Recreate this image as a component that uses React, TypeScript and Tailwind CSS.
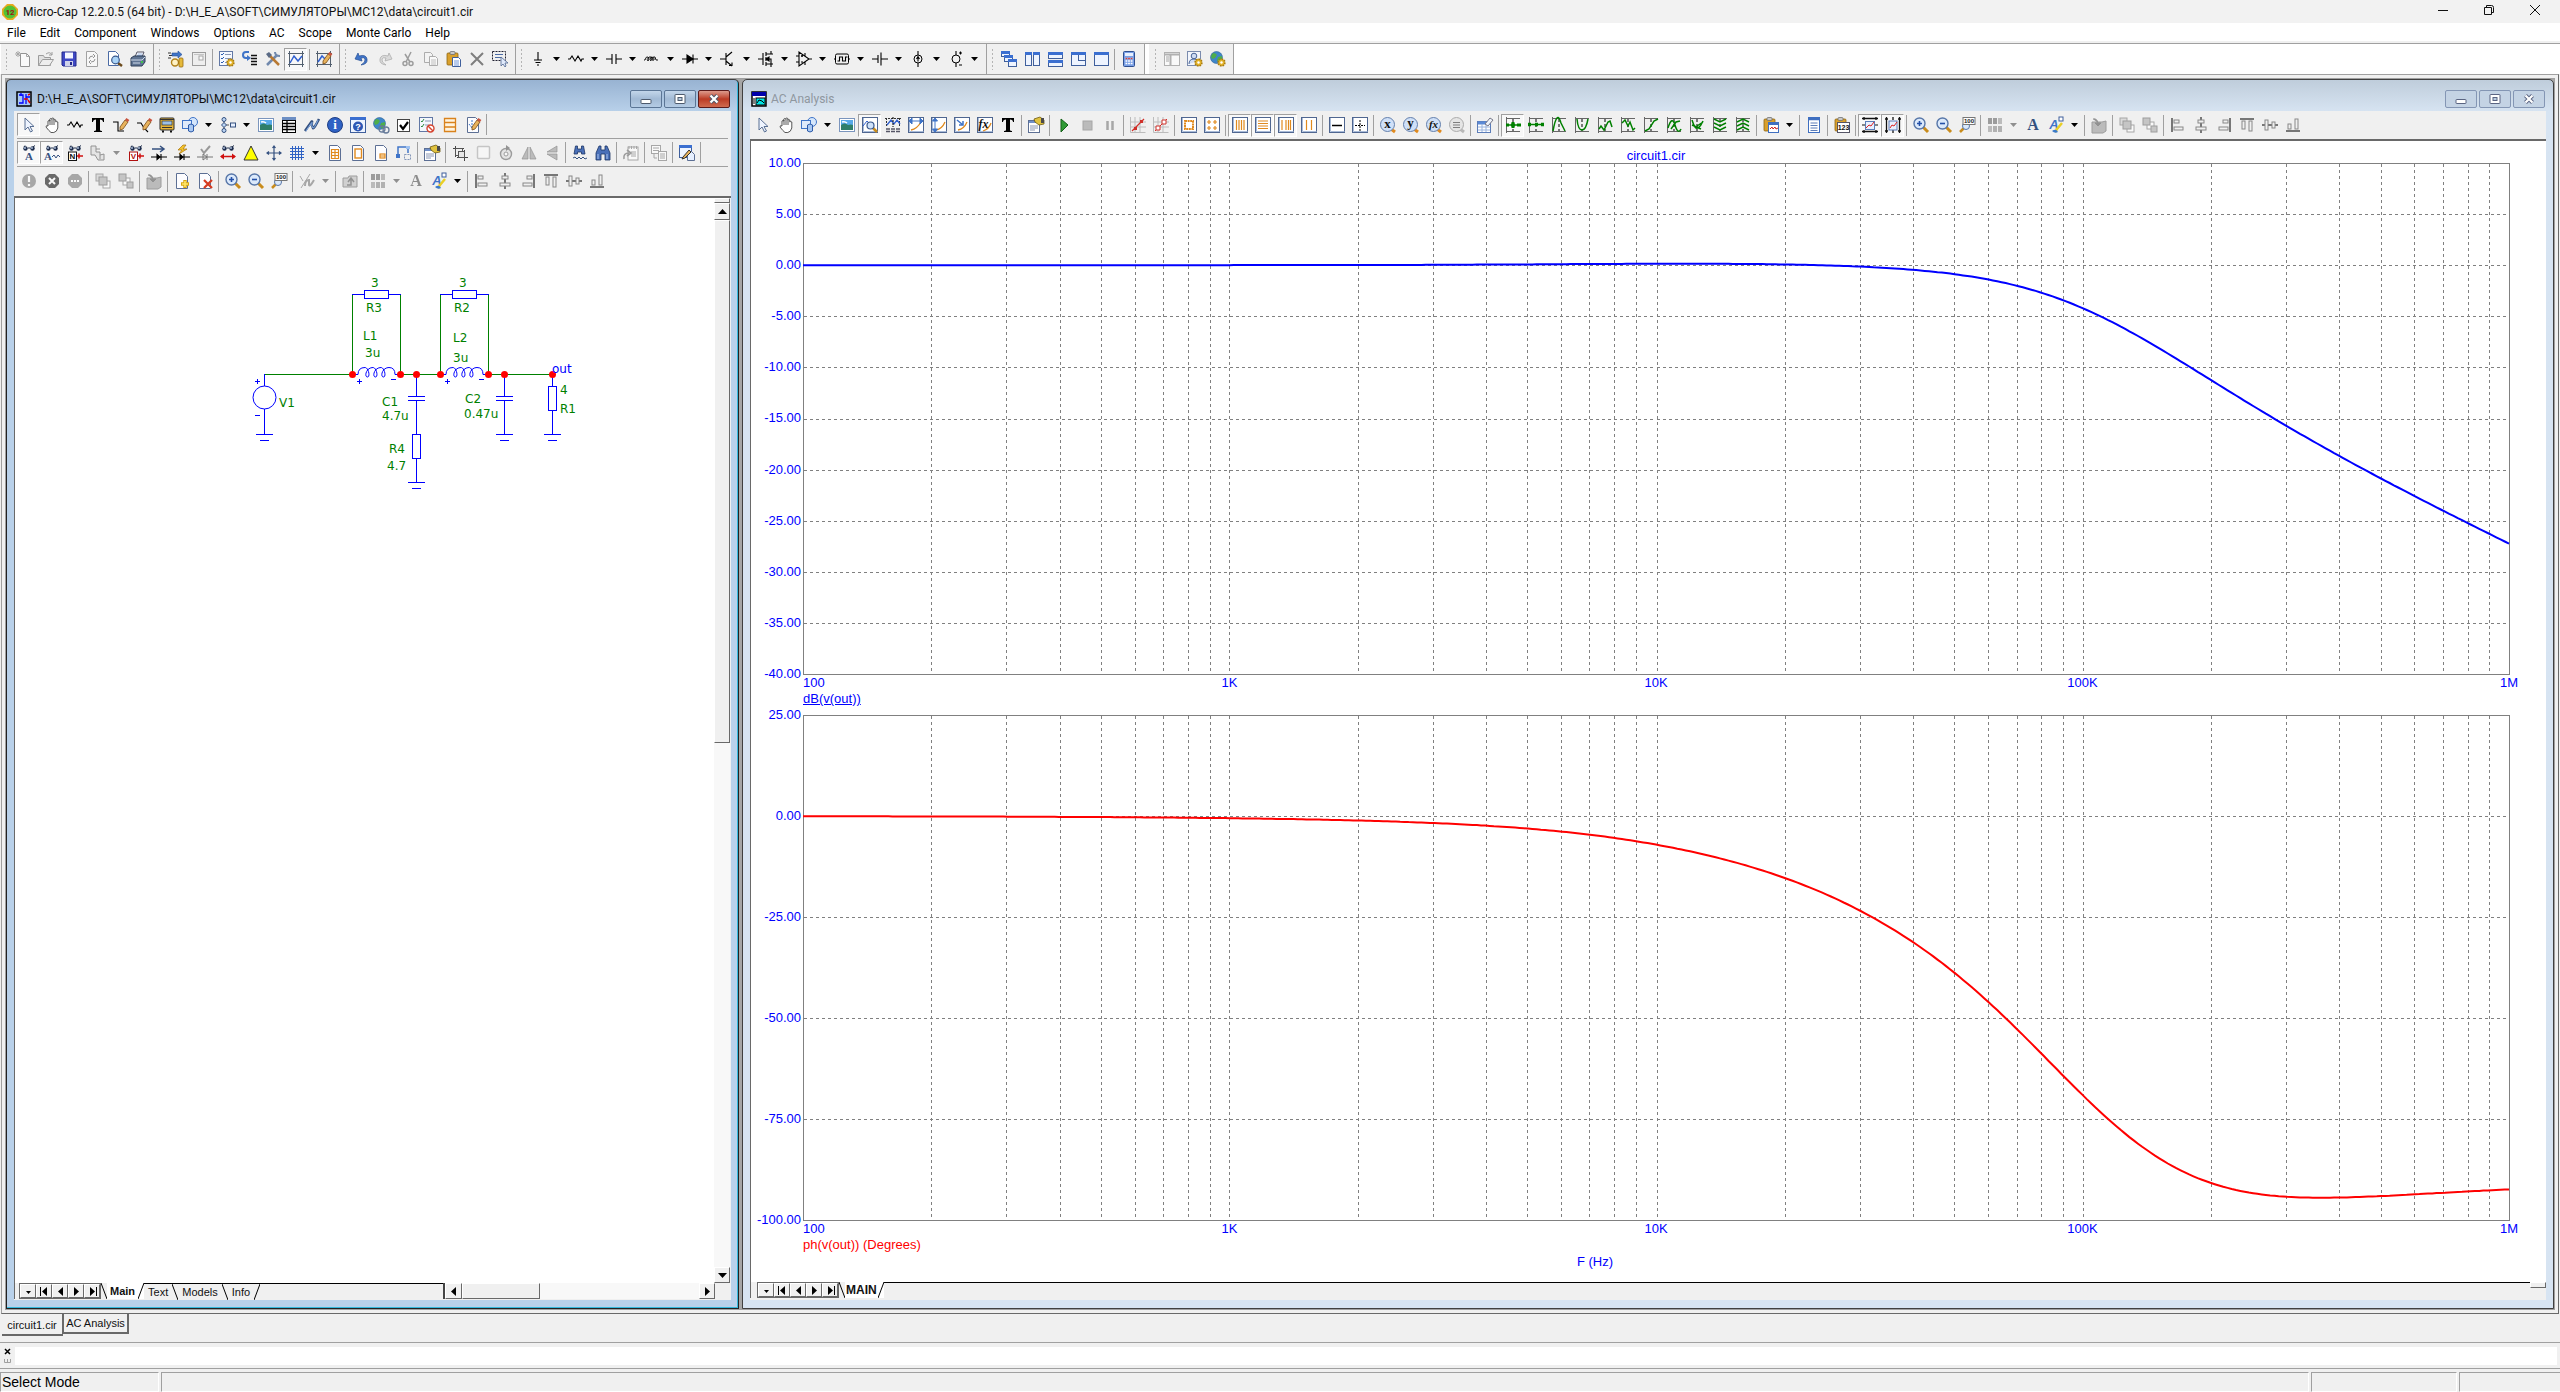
import type { ReactNode } from 'react';
import clsx from 'clsx';

const NAVY = '#34507f';
const BLUE = '#3f74c8';
const ORANGE = '#e08a1e';

const page = <path d="M2.5 .5h8l3 3v12h-11z" fill="#fdfdff" stroke="#5c6f94" />;
const copyPages = (
  <>
    <path d="M1.5 1.5h6l2 2v8h-8z" fill="#f4f6fb" stroke="#70809f" />
    <path d="M6.5 5.5h6l2 2v7h-8z" fill="#fff" stroke="#70809f" />
    <path d="M8 9h5M8 11h5M8 13h5" stroke="#8fa0bf" />
  </>
);
const lens = (
  <>
    <path d="M10 10l5 5" stroke="#c98c1c" strokeWidth="3" />
    <circle cx="6.5" cy="6.5" r="5.5" fill="#dbe9fb" stroke="#5776a8" strokeWidth="1.4" />
  </>
);
const glasses = (
  <>
    <circle cx="4.5" cy="3.5" r="2.2" fill="#1d2c4c" />
    <circle cx="11.5" cy="3.5" r="2.2" fill="#1d2c4c" />
    <circle cx="4" cy="3" r=".9" fill="#b9cbe6" />
    <circle cx="11" cy="3" r=".9" fill="#b9cbe6" />
    <path d="M3 2l1-1.5M12 2l2-1.5M7 3h2" stroke="#1d2c4c" />
  </>
);
const pencil = (
  <>
    <path d="M7 10l5-7 3 2-5 7-3 1z" fill="#e8b25c" stroke="#7a4d16" strokeWidth=".8" />
    <path d="M12 3l1.4-2 3 2-1.4 2z" fill="#c9543f" />
  </>
);
const gear = (
  <>
    <circle cx="11.5" cy="11.5" r="3.4" fill="#e5b52a" stroke="#a87c10" strokeWidth="1.6" strokeDasharray="1.6 1" />
    <circle cx="11.5" cy="11.5" r="1.2" fill="#fff" />
  </>
);
const clipboard = (
  <>
    <rect x="1" y="2" width="11" height="12" rx="1" fill="#d9a02c" stroke="#8d6412" strokeWidth=".8" />
    <rect x="4" y=".5" width="5" height="3" rx="1" fill="#c8c8c8" stroke="#666" strokeWidth=".7" />
  </>
);
const axes = <path d="M1.5 0v16M14.5 0v16M0 2.5h16M0 13.5h16" stroke="#53606f" />;
const plotBox = (
  <>
    <rect x=".5" y=".5" width="15" height="15" fill="#fff" stroke="#4f6690" />
    <path d="M1.5 1v13.500h14" fill="none" stroke="#a9bbd8" />
  </>
);
const greenBox = <path d="M15 1.500H1.500M1.500 0v16M1 14.500h14" fill="none" stroke="#666" />;
const globe = (
  <>
    <circle cx="6.500" cy="6.500" r="6" fill="#3f86c9" stroke="#2a5f94" strokeWidth=".6" />
    <path d="M3 2q3 0 4 2l-2 3-3 1-1-3zM8 6l4-1v3l-3 4-2-3z" fill="#4fae4a" />
  </>
);
const magnifier = (glyph: ReactNode) => (
  <>
    <path d="M11 12l4 3" stroke="#e08a1e" strokeWidth="3" />
    <circle cx="7.500" cy="7.500" r="7" fill="#cfe0f8" stroke="#6480ac" />
    {glyph}
  </>
);
const boxed = (d: string) => (
  <>
    {plotBox}
    <path d={d} fill="none" stroke={ORANGE} strokeWidth="1.2" />
  </>
);
const trace = (d: string) => (
  <>
    {greenBox}
    <path d="M8 2v12" stroke="#000" strokeDasharray="3 2" />
    <path d={d} fill="none" stroke="#008000" strokeWidth="1.5" />
  </>
);
const black = (d: string, fill = 'none') => <path d={d} fill={fill} stroke="#000" strokeWidth="1.1" />;
const win = (x: number, y: number, w: number, h: number) => (
  <>
    <rect x={x + 0.5} y={y + 0.5} width={w - 1} height={h - 1} fill="#eef4ff" stroke="#3f5f9c" />
    <rect x={x} y={y} width={w} height="3" fill="#3b6fd0" />
  </>
);
const bars = (line: string, a: number[], b: number[]) => (
  <>
    <path d={line} stroke="#777" strokeWidth="2" />
    <rect x={a[0]} y={a[1]} width={a[2]} height={a[3]} fill="#f0f0f0" stroke="#888" />
    <rect x={b[0]} y={b[1]} width={b[2]} height={b[3]} fill="#f0f0f0" stroke="#888" />
  </>
);
const glyph = (t: string, x: number, y: number, cls: string, fill: string) => (
  <text x={x} y={y} textAnchor="middle" fill={fill} className={cls}>
    {t}
  </text>
);

const icons: Record<string, ReactNode> = {
  new: (
    <>
      <path d="M5.500 2.500h6l3 3v10h-9z" fill="#fff" stroke="#555" />
      <path d="M11.500 2.500v3h3M3 0v6M0 3h6M1 1l4 4M5 1L1 5" fill="none" stroke="#777" />
    </>
  ),
  open: (
    <>
      <path d="M.5 14.500v-10h5l1 2h6v8z" fill="#d8d8d8" stroke="#666" />
      <path d="M.5 14.500l4-6h11l-4 6z" fill="#eee" stroke="#666" />
      <path d="M8 3q4-3 6 1M14 1v3h-3" fill="none" stroke="#666" />
    </>
  ),
  save: (
    <>
      <path d="M1 1h14v14H2l-1-1z" fill="#3f49c4" stroke="#23298a" />
      <rect x="4" y="1.500" width="8" height="6" fill="#f4f6ff" />
      <rect x="4" y="10" width="8" height="5" fill="#cfd3ea" />
      <rect x="9" y="11" width="2" height="3" fill="#23298a" />
    </>
  ),
  revert: (
    <>
      {page}
      <path d="M5 8q0-3 4-3M9 3l2 2-2 2M11 8q0 3-4 3M7 9l-2 2 2 2" fill="none" stroke="#555" />
    </>
  ),
  preview: (
    <>
      <path d="M1.500 .5h7l3 3v11h-10z" fill="#fff" stroke="#4b6ba5" />
      <path d="M11 12l4 3" stroke="#6b4a1c" strokeWidth="2.500" />
      <circle cx="8.500" cy="9" r="3.800" fill="#a9d3f7" stroke="#39588c" strokeWidth="1.200" />
    </>
  ),
  print: (
    <>
      <path d="M5 6l2-5h7l-2 5z" fill="#fff" stroke="#556" />
      <path d="M7.500 3h5M7 4.500h5" stroke="#7ba0d8" strokeWidth=".8" />
      <path d="M1 7l3-2h11v6l-3 4H1z" fill="#5f7493" stroke="#2f3e57" />
      <path d="M1 9h11l3-3M3 12h7" fill="none" stroke="#cfd9e8" />
      <rect x="11" y="10" width="2" height="2" fill="#3fc04a" />
    </>
  ),
  animate: (
    <>
      <path d="M0 2h3M1 4.500h4M0 7h3" stroke="#333" />
      <path d="M4 2h6V0l4 3.500L10 7V5H4z" fill={BLUE} stroke="#274f96" strokeWidth=".6" />
      <circle cx="7" cy="11.500" r="3.500" fill="#fff2c4" stroke="#b1821b" strokeWidth="1.400" />
      <rect x="11" y="7" width="4" height="9" rx="1" fill="#e5b93a" stroke="#9a6c10" strokeWidth=".8" />
    </>
  ),
  panel: (
    <>
      <rect x="1.500" y="1.500" width="13" height="13" fill="#eee" stroke="#666" />
      <rect x="8" y="5" width="4" height="4" fill="#fff" stroke="#777" />
      <path d="M3 3.500h10" stroke="#aaa" />
    </>
  ),
  prefs: (
    <>
      <rect x=".5" y=".5" width="13" height="14" fill="#f5f8ff" stroke="#6278a5" />
      <path d="M6 3.500h6M6 7.500h6M6 11.500h3" stroke="#8a97b4" />
      <path d="M2 3l1 1 2-2M2 7l1 1 2-2M2 11l1 1 2-2" fill="none" stroke="#2b5db0" />
      {gear}
    </>
  ),
  steps: (
    <>
      <path d="M7 1H4Q1 1 1 4t3 3h2" fill="none" stroke={BLUE} strokeWidth="2" />
      <path d="M5 4l4 3-4 3z" fill={BLUE} />
      <path d="M9 4.500h6M9 7.500h6M9 10.500h6M9 13.500h6" stroke="#111" strokeWidth="1.400" />
    </>
  ),
  tools: (
    <>
      <path d="M2 14L12 4" stroke="#7189ad" strokeWidth="2.500" />
      <path d="M4 4l10 10" stroke="#b87932" strokeWidth="2.500" />
      <path d="M1 3l3-2 3 3-3 3z" fill="#5a6a85" />
      <path d="M10 1q0 4 5 4" fill="none" stroke="#7189ad" strokeWidth="2" />
    </>
  ),
  graph: (
    <>
      {axes}
      <path d="M2 12l4-7 4 5 4-5" fill="none" stroke="#2f5fd0" strokeWidth="1.500" />
    </>
  ),
  graphPen: (
    <>
      {axes}
      <path d="M2 11l4-6 3 3" fill="none" stroke="#2f5fd0" strokeWidth="1.500" />
      {pencil}
    </>
  ),
  undo: <path d="M7 14q7-1 6-6-1-5-8-3L4 2 1 8l7 2-1-3q3-1 4 1 1 3-4 6z" fill={BLUE} stroke="#244d93" strokeWidth=".7" />,
  redo: <path d="M9 14Q2 13 3 8q1-5 8-3l1-3 3 6-7 2 1-3Q6 6 5 8q-1 3 4 6z" fill="#ccc" stroke="#777" strokeWidth=".7" />,
  cut: (
    <>
      <path d="M11 1L6 11M5 3l5 8" stroke="#666" strokeWidth="1.500" />
      <circle cx="5" cy="12.500" r="2" fill="none" stroke="#666" strokeWidth="1.500" />
      <circle cx="11" cy="12.500" r="2" fill="none" stroke="#666" strokeWidth="1.500" />
    </>
  ),
  copy: copyPages,
  paste: (
    <>
      {clipboard}
      <path d="M6.500 6.500h6l2 2v7h-8z" fill="#fff" stroke="#3f5f9c" />
      <path d="M8 10h5M8 12h5M8 14h5" stroke="#4b7bd0" strokeWidth=".8" />
    </>
  ),
  remove: <path d="M2 2l12 12M14 2L2 14" stroke="#333" strokeWidth="2" />,
  selectBox: (
    <>
      <rect x=".5" y=".5" width="13" height="9" fill="none" stroke="#223" strokeDasharray="2 1" />
      <path d="M3 3.500h8M3 6.500h6" stroke="#4b6ba5" />
      <path d="M9 6v9l2-2 2 3 1-1-1-3h3z" fill="#dfe9fb" stroke="#4f6690" strokeWidth=".8" />
    </>
  ),
  ground: black('M8 1v8M4 9h8M5.500 11.500h5M7 14h2'),
  resistor: black('M0 8h2l2-3 3 5 3-5 3 5 1-2h2'),
  cap: black('M0 8h6M6 3v10M10 3v10M10 8h6'),
  inductor: (
    <path d="M0 9h1q1-4 3-3 2 2 0 4-2-1 1-4 3-1 3 2-1 3-2 1 0-3 2-3 3 1 2 3-2 1-2-1 1-3 3-2l1 3h2" fill="none" stroke="#000" strokeWidth=".9" />
  ),
  diode: (
    <>
      {black('M0 8h16M11 3.500v9')}
      {black('M5 4v8l6-4z', '#000')}
    </>
  ),
  npn: black('M0 8h6M6 2v12M6 6l6-5M6 10l6 5M9 14.500h3v-3'),
  mosfet: (
    <>
      {black('M0 8h5M5 2v12M8 1v4M8 6v4M8 11v4M8 3h5v-3M8 8h5v8M8 13h5M13 3h2M13 13h2')}
      {black('M8 8l3-2v4z', '#000')}
    </>
  ),
  opamp: black('M3 1v14l10-7zM0 5h3M0 11h3M13 8h3M5 5h2M6 4v2M5 11h2M9 2v3M9 11v3'),
  pulse: (
    <>
      <rect x="1.500" y="3" width="13" height="10" rx="1.500" fill="none" stroke="#000" />
      {black('M0 8h1M15 8h1M3.500 10h2V6h3v4h3V6h2')}
    </>
  ),
  battery: black('M0 8h6M6 4v8M9 1.500v13M9 8h7'),
  isrc: (
    <>
      <circle cx="8" cy="8" r="4" fill="none" stroke="#000" />
      {black('M8 0v4M8 12v4M8 5.500v5M6.500 8L8 5.500 9.500 8')}
    </>
  ),
  vsrc: (
    <>
      <circle cx="8" cy="8" r="4" fill="none" stroke="#000" />
      {black('M8 0v4M8 12v4M11 2h3M12.500 .5v3M11 14h3')}
    </>
  ),
  cascade: (
    <>
      {win(0, 0, 9, 6)}
      {win(3, 4, 9, 7)}
      {win(7, 8, 9, 8)}
    </>
  ),
  tileV: (
    <>
      {win(1, 1, 7, 14)}
      {win(9, 1, 7, 14)}
    </>
  ),
  tileH: (
    <>
      {win(1, 1, 15, 7)}
      {win(1, 9, 15, 7)}
    </>
  ),
  tileX: (
    <>
      {win(1, 1, 15, 14)}
      <path d="M8.500 4v6M8 9.500h7" stroke="#3f5f9c" />
    </>
  ),
  single: win(1, 1, 15, 14),
  calc: (
    <>
      <rect x="2.500" y=".5" width="11" height="15" rx="1" fill="#7aa0e6" stroke="#2f4f8f" />
      <rect x="4" y="2" width="8" height="3" fill="#e7f0ff" />
      <path d="M4.500 7.500h7M4.500 10h7M4.500 12.500h7" stroke="#fff" strokeWidth="1.600" strokeDasharray="1.800 .8" />
      <path d="M4.500 7.500h7" stroke="#d04040" strokeWidth="1.600" strokeDasharray="1.800 .8" />
    </>
  ),
  sidebar: (
    <>
      <rect x=".5" y="1.500" width="15" height="13" fill="#fff" stroke="#888" />
      <path d="M1 3.500h14M6.500 3v11" stroke="#888" strokeWidth="2" />
      <path d="M2 6h3M2 8h3M2 10h3" stroke="#777" />
    </>
  ),
  userGear: (
    <>
      <rect x=".5" y=".5" width="13" height="14" fill="#f3f6fc" stroke="#7b8cae" />
      <circle cx="7" cy="5" r="2.800" fill="#cfdcf3" stroke="#4a6597" />
      <path d="M2 13q0-5 5-5 3 0 4 2" fill="#cfdcf3" stroke="#4a6597" />
      {gear}
    </>
  ),
  globeGear: (
    <>
      {globe}
      {gear}
    </>
  ),
  pointer: <path d="M4 1v12l3-3 2.500 5 2-1L9 9.500h4z" fill="#eef4ff" stroke="#5a7094" />,
  hand: (
    <path d="M4 9V4q1-1 1.800 0V2q1-1 2 0v-.5q1-1 2 0V3q1-1 2 0v2q1-1 2 0v6q-1 4-4 4.500H7Q5 14 2 10q0-2 2-1zM6 3v5M8 2v6M10 3v5" fill="#fff" stroke="#444" strokeWidth=".9" />
  ),
  text: <path d="M2 1h12v4h-1q0-2.500-3-2.500V13q0 1 2 1v1H4v-1q2 0 2-1V2.500Q3 2.500 3 5H2z" />,
  wirePen: (
    <>
      {black('M0 5h5v9h6')}
      {pencil}
    </>
  ),
  diagPen: (
    <>
      {black('M1 6h4l3 5 4 4')}
      {pencil}
    </>
  ),
  bus: (
    <>
      <rect x="1" y="1" width="14" height="12" rx="1" fill="#e5b53a" stroke="#2b2b2b" />
      <rect x="3" y="4" width="10" height="4" fill="#9dc1e4" stroke="#333" strokeWidth=".7" />
      <path d="M1 2.500h14M3 10.500h10" stroke="#333" />
      <path d="M3 14.500h2M11 14.500h2" stroke="#111" strokeWidth="2" />
    </>
  ),
  shapes: (
    <>
      <circle cx="11" cy="5" r="4.500" fill="#d5e6fb" stroke={BLUE} />
      <rect x=".5" y="3.500" width="9" height="8" fill="#dfeafa" stroke={BLUE} />
      <path d="M6.500 8v6q2.500 2 5 0V8q-2.500-2-5 0z" fill="#a9c8f2" stroke="#2d5aa8" />
    </>
  ),
  tree: (
    <>
      <path d="M4 4v8M4 8h5" stroke="#555" />
      <circle cx="4" cy="2.500" r="2" fill="#bcd5f5" stroke={NAVY} />
      <path d="M4 5.500l2.500 2.500L4 10.500 1.500 8z" fill="#bcd5f5" stroke={NAVY} />
      <circle cx="4" cy="13.500" r="2" fill="#bcd5f5" stroke={NAVY} />
      <rect x="10.500" y="6" width="5" height="4" fill="#e7f0ff" stroke={NAVY} />
    </>
  ),
  picture: (
    <>
      <rect x=".5" y="1.500" width="15" height="13" fill="#fff" stroke="#7b95bd" />
      <rect x="2" y="3" width="12" height="10" fill="#57a9e8" />
      <path d="M2 8q4-3 7 0 3-1 5 0v5H2z" fill="#2f7f6a" />
      <path d="M3 5q3-1 5 1" stroke="#fff" fill="none" strokeWidth="1.500" />
    </>
  ),
  table: (
    <>
      <rect x="1" y="0" width="14" height="3" fill="#6d8fc4" />
      <rect x="1.500" y="3.500" width="13" height="12" fill="#fff" stroke="#000" />
      <path d="M1 6.500h14M1 9.500h14M1 12.500h14M6 3v13" stroke="#000" strokeWidth="1.300" />
    </>
  ),
  wave: (
    <>
      <path d="M1 14Q9 2 8 5t1 6q1 1 6-9" fill="none" stroke={NAVY} strokeWidth="2.500" />
      <path d="M2 14Q9 3 8 6t1 5q1 1 5-8" fill="none" stroke="#86b0ea" />
    </>
  ),
  info: (
    <>
      <circle cx="8" cy="8" r="7.500" fill="#2f62c4" stroke="#1f3f86" />
      {glyph('i', 8, 12, "font-['Liberation_Serif'] text-[13px] font-bold", '#fff')}
    </>
  ),
  help: (
    <>
      {win(0, 0, 16, 16)}
      <circle cx="8" cy="9.500" r="5" fill="#2c56b4" />
      {glyph('?', 8, 13, "font-['Liberation_Sans'] text-[9px] font-bold", '#fff')}
    </>
  ),
  globeLink: (
    <>
      {globe}
      <path d="M6 12q0-3 3-3t3 3-3 3-3-3zM10 13q0-3 3-3t3 3-3 3-3-3z" fill="none" stroke="#667a99" strokeWidth="1.300" />
    </>
  ),
  check: (
    <>
      <rect x="1.500" y="2.500" width="12" height="12" fill="#fff" stroke="#444" />
      <path d="M4 8l3 4 5-7" fill="none" stroke="#000" strokeWidth="2.200" />
    </>
  ),
  checklist: (
    <>
      <rect x=".5" y=".5" width="13" height="14" fill="#f4f7fd" stroke="#6278a5" />
      <path d="M2 4l1 1 2-3M2 9l1 1 2-3" fill="none" stroke="#2c8a3c" />
      <path d="M6 4h6M6 8h4" stroke="#8a97b4" />
      <circle cx="11.500" cy="11.500" r="3.500" fill="#fff" stroke="#d64430" strokeWidth="1.400" />
      <path d="M9 9l5 5" stroke="#d64430" strokeWidth="1.400" />
    </>
  ),
  rows: <path d="M2.500 1.500h11v13h-11zM2.500 5.500h11M2.500 10h11" fill="#fff4e0" stroke="#d9821c" strokeWidth="1.300" />,
  pagePen: (
    <>
      {page}
      <path d="M7 3v7M4 7l3 4 3-4" stroke={BLUE} fill="none" strokeDasharray="2 1" />
      {pencil}
    </>
  ),
  glassA: (
    <>
      {glasses}
      {glyph('A', 8, 15, "font-['Liberation_Serif'] text-[11px] font-bold", NAVY)}
    </>
  ),
  glassRes: (
    <>
      {glasses}
      {glyph('A', 4, 15, "font-['Liberation_Serif'] text-[11px] font-bold", NAVY)}
      <path d="M8 12l2-2 2 3 2-3 2 2" fill="none" stroke={NAVY} />
    </>
  ),
  glassN: (
    <>
      {glasses}
      <rect x="1.500" y="7" width="8" height="8.500" fill="#fff" stroke="#111" />
      {glyph('N', 5.5, 14, "font-['Liberation_Sans'] text-[8px] font-bold", '#111')}
      <path d="M10 11h6M12 8.500v5" stroke="#d01010" strokeWidth="1.500" />
    </>
  ),
  glassV: (
    <>
      {glasses}
      <rect x="1.500" y="7" width="8" height="8.500" fill="#fff" stroke="#b01010" />
      {glyph('V', 5.5, 14, "font-['Liberation_Sans'] text-[8px] font-bold", '#b01010')}
      <path d="M10 11h6M12 8.500v5" stroke="#d01010" strokeWidth="1.500" />
    </>
  ),
  hands: <path d="M1 1h5v6h4v3l4-1v6H8l-3-5H1zM6 4h4M10 10v4" fill="#ddd" stroke="#555" />,
  current: (
    <>
      <path d="M1 4h11M9 1l4 3-4 3" fill="none" stroke={NAVY} strokeWidth="1.500" />
      {black('M0 12h16M10 9v6')}
      {black('M6 9.500v5l3-2.500z', '#000')}
    </>
  ),
  power: (
    <>
      <path d="M9 0L4 5h4L5 9l8-5H9l3-4z" fill="#f5c52a" stroke="#a9720c" strokeWidth=".7" />
      {black('M0 12h16M10 9v6')}
      {black('M6 9.500v5l3-2.500z', '#000')}
    </>
  ),
  condition: (
    <>
      <path d="M4 4l3 4 6-7" fill="none" stroke="#999" strokeWidth="2" />
      <path d="M0 12h16M10 9v6M6 9v6l4-3z" fill="none" stroke="#777" />
    </>
  ),
  pinLink: (
    <>
      {glasses}
      <path d="M1 11.500h14" stroke="#d01010" strokeWidth="1.500" />
      <path d="M0 11.500l4-3v6zM16 11.500l-4-3v6z" fill="#d01010" />
    </>
  ),
  triangle: <path d="M8 1l7 14H1z" fill="#ffff00" stroke="#333" />,
  cross: <path d="M8 1v14M1 8h14M6.500 3L8 1l1.500 2M6.500 13L8 15l1.500-2M3 6.500L1 8l2 1.500M13 6.500L15 8l-2 1.500" fill="none" stroke={NAVY} strokeWidth="1.200" />,
  grid: <path d="M3.500 1v14M6.500 1v14M9.500 1v14M12.500 1v14M1 3.500h14M1 6.500h14M1 9.500h14M1 12.500h14" stroke="#2f62c4" />,
  pageTable: (
    <>
      {page}
      <path d="M4.500 4.500h7v9h-7zM4.500 7.500h7M4.500 10.500h7M8 4.500v9" fill="none" stroke={ORANGE} strokeWidth="1.200" />
    </>
  ),
  pageBorder: (
    <>
      {page}
      <rect x="5" y="4" width="6.500" height="9" fill="none" stroke={ORANGE} strokeWidth="1.400" />
    </>
  ),
  pageForm: (
    <>
      {page}
      <rect x="7" y="9" width="5" height="4" fill="#fff4e0" stroke={ORANGE} strokeWidth="1.200" />
      <path d="M7 11h5" stroke={ORANGE} />
    </>
  ),
  connector: (
    <>
      <path d="M2 9V2h10v6" fill="none" stroke={BLUE} strokeWidth="1.500" />
      <rect x="0" y="9" width="4" height="4" fill={BLUE} />
      <rect x="10" y="1" width="4" height="3" fill="#9dc1f1" />
      <rect x="8.500" y="9.500" width="6" height="5" fill="none" stroke="#8597b8" strokeDasharray="2 1" />
    </>
  ),
  props: (
    <>
      <rect x=".5" y="3.500" width="11" height="12" fill="#fff" stroke="#5c6f94" />
      <rect x="1" y="4" width="10" height="2" fill="#6f8fc8" />
      <path d="M2 9h8M2 11h8M2 13h5" stroke="#8a97b4" />
      <path d="M6 2l6-2 4 3v4l-5 1-4-3z" fill="#e0c23e" stroke="#6f5a10" strokeWidth=".8" />
      <path d="M13 1h3v5h-3z" fill="#4a4a4a" />
    </>
  ),
  group: (
    <>
      <path d="M3.500 1v11M1 3.500h11M12.500 5v11M5 12.500h11" stroke="#444" />
      <rect x="3.500" y="3.500" width="7" height="7" fill="none" stroke="#555" />
      <rect x="6.500" y="6.500" width="6" height="6" fill="#e6e6e6" stroke="#555" />
    </>
  ),
  blank: <rect x="2.500" y="1.500" width="12" height="12" rx="1" fill="#fbfbfb" stroke="#aaa" strokeWidth="1.500" />,
  rotate: (
    <>
      <circle cx="8" cy="9" r="5.500" fill="#ddd" stroke="#666" strokeWidth="1.400" />
      <circle cx="8" cy="9" r="2" fill="#fff" stroke="#666" />
      <path d="M8 0v6l4-3z" fill="#555" />
    </>
  ),
  flipH: <path d="M7 2v12H1zM9 2v12h6z" fill="#999" stroke="#555" strokeWidth=".7" />,
  flipV: <path d="M13 7V1L3 7zM13 9v6L3 9z" fill="#999" stroke="#555" strokeWidth=".7" />,
  findWave: (
    <>
      <path d="M3.500 1h2v3h4V1h2l1.500 8H9.500V7h-4v2H2z" fill="#4a70b8" stroke="#1d3566" strokeWidth=".8" />
      <path d="M1 13l2-1 2 2 2-2 2 2 2-2 2 2 2-1" fill="none" stroke={NAVY} />
    </>
  ),
  find: (
    <>
      <path d="M4 1h2v4h4V1h2l3 7v7h-5V9H6v6H1V8z" fill="#4a70b8" stroke="#1d3566" strokeWidth=".8" />
      <path d="M3 9v5M12 9v5" stroke="#a9c3ee" />
    </>
  ),
  notebook: (
    <>
      <rect x="5" y="2" width="10" height="13" fill="#fff" stroke="#777" />
      <path d="M6 1v3M8.500 1v3M11 1v3M13.500 1v3M8 7h5M8 9h5M8 11h5" stroke="#777" />
      <path d="M1 14q-1-6 5-6M4 5l4 3-4 3" fill="none" stroke="#666" strokeWidth="1.600" />
    </>
  ),
  copyProps: (
    <>
      <rect x=".5" y=".5" width="9" height="8" fill="#fff" stroke="#777" />
      <rect x="7.500" y="6.500" width="8" height="9" fill="#fff" stroke="#777" />
      <path d="M2 3h6M2 5.500h6M9 9h5M9 11h5M9 13h5M3 9v4h3" fill="none" stroke="#777" />
    </>
  ),
  editPage: (
    <>
      {win(0, 0, 13, 13)}
      <path d="M8.500 15.500v-6l4-3 3 3v6z" fill="#e7f0ff" stroke="#5c6f94" />
      <path d="M4 12l6-7 2 2-6 6-3 1z" fill="#e8b25c" stroke="#222" strokeWidth=".9" />
    </>
  ),
  alert: (
    <>
      <circle cx="8" cy="8" r="7" fill="#777" />
      <path d="M8 3v6M8 11v2" stroke="#fff" strokeWidth="2.200" />
    </>
  ),
  stopX: (
    <>
      <path d="M5 1h6l4 4v6l-4 4H5l-4-4V5z" fill="#111" />
      <path d="M5 5l6 6M11 5l-6 6" stroke="#fff" strokeWidth="2" />
    </>
  ),
  dots: (
    <>
      <path d="M5 1h6l4 4v6l-4 4H5l-4-4V5z" fill="#777" />
      <path d="M4 8h8" stroke="#fff" strokeWidth="2" strokeDasharray="2 1" />
    </>
  ),
  front: (
    <>
      <rect x="8" y="8" width="7" height="7" fill="#fff" stroke="#777" />
      <rect x="1" y="1" width="7" height="7" fill="#ccc" stroke="#777" />
      <rect x="4" y="4" width="8" height="8" fill="#aaa" stroke="#666" />
    </>
  ),
  back: (
    <>
      <rect x="5" y="5" width="7" height="7" fill="#fff" stroke="#777" />
      <rect x="1" y="1" width="7" height="7" fill="#aaa" stroke="#666" />
      <rect x="9" y="9" width="6" height="6" fill="#aaa" stroke="#666" />
    </>
  ),
  load: (
    <>
      <path d="M1 5h10l4-1v10l-3 2H1z" fill="#999" stroke="#666" />
      <path d="M2 2q4-1 5 4M4 6h6L7 9z" fill="#555" stroke="#555" />
    </>
  ),
  pageAdd: (
    <>
      {page}
      <path d="M11 7v8M7 11h8" stroke="#d9a60f" strokeWidth="3.400" />
      <path d="M11 8v6M8 11h6" stroke="#ffe66b" strokeWidth="1.600" />
    </>
  ),
  pageDel: (
    <>
      {page}
      <path d="M7 7l8 8M15 7l-8 8" stroke="#d63a1f" strokeWidth="2.200" />
    </>
  ),
  zoomIn: (
    <>
      {lens}
      <path d="M6.500 4v5M4 6.500h5" stroke="#2450a8" strokeWidth="1.600" />
    </>
  ),
  zoomOut: (
    <>
      {lens}
      <path d="M4 6.500h5" stroke="#2450a8" strokeWidth="1.600" />
    </>
  ),
  zoom100: (
    <>
      <path d="M5 11l-4 4" stroke="#c98c1c" strokeWidth="2.500" />
      <circle cx="7" cy="9" r="3.500" fill="#dbe9fb" stroke="#5776a8" />
      <rect x="4" y=".5" width="12" height="7" fill="#fff" stroke="#777" />
      {glyph('100', 10, 6, "font-['Liberation_Sans'] text-[6px] font-bold", '#222')}
    </>
  ),
  slash: (
    <>
      <path d="M2 15L11 1M1 3l3 5" stroke="#777" />
      <path d="M6 13q0-6 4-6v5q1 2 5-5" fill="none" stroke="#777" strokeWidth="2" />
    </>
  ),
  folderUp: (
    <>
      <path d="M1 5h5l1-2h8v11H1z" fill="#bbb" stroke="#666" />
      <path d="M5 12h4V6M6 9l3-4 3 4" fill="none" stroke="#555" strokeWidth="1.500" />
    </>
  ),
  colorGrid: (
    <>
      <path d="M1 1h4v6H1zM6 1h4v6H6z" fill="#666" />
      <path d="M11 1h4v6h-4zM1 9h4v6H1z" fill="#999" />
      <path d="M6 9h4v6H6zM11 9h4v6h-4z" fill="#888" />
    </>
  ),
  fontA: glyph('A', 8, 13, "font-['Liberation_Serif'] text-[16px] font-bold", NAVY),
  fontPen: (
    <>
      {glyph('A', 6, 12, "font-['Liberation_Sans'] text-[13px] font-bold italic", BLUE)}
      <rect x="11" y="0" width="4" height="4" fill="#fff" stroke="#3f5f9c" />
      <path d="M14 6l-5 6-2 3" fill="none" stroke="#e9cf27" strokeWidth="2.500" />
      <path d="M4 14q4-3 6 1-3 2-6-1z" fill="#3b7ac9" />
    </>
  ),
  alignLeft: bars('M2 1v14', [4, 3, 5, 3], [4, 10, 9, 3]),
  alignCenter: bars('M8 0v16', [5, 3, 6, 3], [3, 10, 10, 3]),
  alignRight: bars('M14 1v14', [7, 3, 5, 3], [3, 10, 9, 3]),
  alignTop: bars('M1 2h14', [3, 4, 3, 8], [10, 4, 3, 10]),
  alignMiddle: bars('M0 8h16', [3, 3, 3, 10], [10, 5, 3, 6]),
  alignBottom: bars('M1 14h14', [3, 7, 3, 5], [10, 2, 3, 10]),
  zoomPlot: (
    <>
      {plotBox}
      <path d="M1 9l4-5 4 4" fill="none" stroke="#2f5fd0" />
      <path d="M11 11l4 4" stroke="#c98c1c" strokeWidth="2.500" />
      <circle cx="8.500" cy="8.500" r="3.500" fill="#cfe2fa" stroke="#39588c" strokeWidth="1.200" />
    </>
  ),
  cursorPlot: (
    <>
      <path d="M0 1.500h16M1.500 1v9M14.500 1v9" stroke="#333" strokeDasharray="2 1" />
      <path d="M2 8l4-5 3 4 3-4 3 4" fill="none" stroke="#2f5fd0" strokeWidth="1.300" />
      <path d="M8 0v10" stroke="#000" strokeDasharray="2 1" />
      <path d="M1 12h14M1 14.500h14" stroke="#556" strokeWidth="1.500" strokeDasharray="4 1" />
    </>
  ),
  scaleX: (
    <>
      {plotBox}
      <path d="M3 13q6-1 10-8" fill="none" stroke={ORANGE} strokeWidth="1.300" />
      <path d="M1 4l3-3v6zM15 4l-3-3v6zM3 4h10" fill={BLUE} stroke={BLUE} />
    </>
  ),
  scaleY: (
    <>
      {plotBox}
      <path d="M5 13q6-1 9-8" fill="none" stroke={ORANGE} strokeWidth="1.300" />
      <path d="M4 1L1.500 4h5zM4 15l-2.500-3h5zM4 3v10" fill={BLUE} stroke={BLUE} />
    </>
  ),
  scaleAuto: (
    <>
      {plotBox}
      <path d="M4 13q6-1 9-8" fill="none" stroke={ORANGE} strokeWidth="1.300" />
      <path d="M3 3l6 5M9 4v4H5" fill="none" stroke={BLUE} strokeWidth="1.500" />
    </>
  ),
  scaleFx: (
    <>
      {plotBox}
      <path d="M6 14q6-2 8-8" fill="none" stroke={ORANGE} strokeWidth="1.300" />
      {glyph('fx', 6.500, 11, "font-['Liberation_Serif'] text-[12px] font-bold italic", '#111')}
    </>
  ),
  play: <path d="M5 2l7 6-7 7z" fill="#2f9a35" stroke="#156018" />,
  stopSquare: <rect x="4" y="4" width="9" height="9" fill="#999" stroke="#777" />,
  pause: <path d="M5.500 4v9M10.500 4v9" stroke="#777" strokeWidth="2.500" />,
  tagPoints: (
    <>
      <path d="M.5 0v15.500h15M0 5h16M0 10h16M5 0v16M10 0v16" fill="none" stroke="#bcbcbc" />
      <path d="M2 14L14 2" stroke="#d0302a" strokeWidth="1.300" />
      <path d="M4 10h3v3H4zM10 3h3v3h-3z" fill="#d0302a" />
    </>
  ),
  tagSquares: (
    <>
      <path d="M.5 0v15.500h15M0 5h16M0 10h16M5 0v16M10 0v16" fill="none" stroke="#bcbcbc" />
      <path d="M2 14L14 2" stroke="#d0302a" />
      <path d="M3 9h4v4H3zM9 3h4v4H9z" fill="#fff" stroke="#d0302a" />
    </>
  ),
  tokenRing: (
    <>
      {plotBox}
      <rect x="4" y="4" width="8" height="8" fill="none" stroke={ORANGE} strokeWidth="2" strokeDasharray="2 .6" />
    </>
  ),
  tokenPlus: boxed('M3 5h4M5 3v4M9 5h4M11 3v4M3 11h4M5 9v4M9 11h4M11 9v4'),
  gridV: boxed('M4.500 3v10M7 3v10M9.500 3v10M12 3v10'),
  gridH: boxed('M3 4h10M3 6.500h10M3 9h10M3 11.500h10'),
  gridVWide: boxed('M4 3v10M8 3v10M10.500 3v10M12.500 3v10'),
  gridVPair: boxed('M5.500 3v10M10.500 3v10'),
  lineSolid: (
    <>
      {plotBox}
      <path d="M3 8.500h10" stroke="#000" strokeWidth="1.500" />
    </>
  ),
  lineCross: (
    <>
      {plotBox}
      <path d="M3 8.500h10M8 3v11" stroke="#000" strokeDasharray="2 1" />
    </>
  ),
  magX: magnifier(glyph('x', 7.5, 11, "font-['Liberation_Serif'] text-[13px] font-bold", '#111')),
  magY: magnifier(glyph('y', 7.5, 10, "font-['Liberation_Serif'] text-[13px] font-bold", '#111')),
  magF: magnifier(glyph('fx', 7.5, 11, "font-['Liberation_Serif'] text-[11px] font-bold italic", '#111')),
  magLines: magnifier(<path d="M4 5.500h7M4 8h7M4 10.500h7" stroke="#333" strokeWidth="1.200" />),
  tableErase: (
    <>
      <rect x=".5" y="4.500" width="13" height="11" fill="#fff" stroke="#5c7db8" />
      <path d="M1 6h12" stroke="#5b8ad6" strokeWidth="3" />
      <path d="M1 10h12M1 13h12M5 7v8M9 7v8" stroke="#9ab4de" />
      <path d="M8 7l5-6 3 2-5 6z" fill="#eef3fa" stroke="#778" />
    </>
  ),
  trace1: (
    <>
      {trace('M1 8h14')}
      <path d="M1 8h3M6 8h4M12 8h4M8 5v6" stroke="#008000" strokeWidth="3" />
    </>
  ),
  trace2: (
    <>
      {trace('M1 7.500h14')}
      <path d="M0 7.500h3M7 7.500h3M13 7.500h3" stroke="#008000" strokeWidth="3.500" />
    </>
  ),
  trace3: trace('M2 14Q6-8 10 6l4 8'),
  trace4: trace('M3 2q1 11 5 11t6-11'),
  trace5: trace('M2 12l2-3 3 4 4-8 2-1 2 6'),
  trace6: trace('M2 6l3-3 3 6 2-4 3 8 2-2'),
  trace7: trace('M2 14l4-2 5-8 4-2'),
  trace8: trace('M2 11Q6-2 9 8t6 4M5 12l5-7 4-1'),
  trace9: trace('M3 3q3 10 6 8t5-7M8 9l6-4M3 8l9 4'),
  trace10: trace('M2 2l6 3 6-3M2 6l6 3 6-3M2 10l6 3 6-3'),
  trace11: trace('M2 5l6-3 6 3M2 9l6-3 6 3M2 13l6-3 6 3'),
  pasteWave: (
    <>
      {clipboard}
      <rect x="5.500" y="5.500" width="10" height="10" fill="#fff" stroke="#3f6fc0" />
      <path d="M6 7h9" stroke="#3f6fc0" strokeWidth="2" />
      <path d="M7 12l2-2 1 2 2-2 1 2 2-1" fill="none" stroke="#c22" />
    </>
  ),
  list: (
    <>
      <rect x="2.500" y=".5" width="11" height="15" fill="#fff" stroke="#3f6fc0" />
      <path d="M3 2h10" stroke="#3f6fc0" strokeWidth="2.500" />
      <path d="M4.500 6h7M4.500 8.500h7M4.500 11h7M4.500 13.500h7" stroke="#5c7db8" />
    </>
  ),
  paste123: (
    <>
      {clipboard}
      <rect x="3.500" y="5.500" width="12" height="10" fill="#fff" stroke="#556" />
      {glyph('123', 9.5, 13, "font-['Liberation_Sans'] text-[7px] font-bold", '#111')}
    </>
  ),
  fitX: (
    <>
      <path d="M0 1.500h16M0 14.500h16M2 0v3M14 0v3M2 13v3M14 13v3" stroke="#111" strokeWidth="1.300" />
      <rect x="3.500" y="4.500" width="9" height="8" fill="#e7f0ff" stroke="#5c7db8" />
      <path d="M4 11l3-3 2 1 3-4" fill="none" stroke="#d22" />
      <path d="M0 8h3M13 8h3" stroke="#111" />
    </>
  ),
  fitY: (
    <>
      <path d="M1.500 0v16M14.500 0v16M0 2h3M0 14h3M13 2h3M13 14h3M8 0v3M8 13v3" stroke="#111" strokeWidth="1.300" />
      <rect x="4" y="4" width="8" height="9" fill="#e7f0ff" stroke="#5c7db8" />
      <path d="M5 11l2-3 2 1 3-4" fill="none" stroke="#d22" />
    </>
  ),
};

// "|" separator, "v"/"V" drop-down arrow (active/disabled), "*" pressed, "-" disabled
function Tools({ items }: { items: string }) {
  return (
    <>
      {items.split(' ').map((item, i) => {
        if (item === '|') {
          return <div key={i} className="mx-[2px] h-[21px] w-px shrink-0 bg-[#a0a0a0]" />;
        }
        if (item === 'v' || item === 'V') {
          return (
            <button key={i} aria-label="More" className="flex h-[22px] w-[15px] shrink-0 items-center justify-center">
              <svg viewBox="0 0 7 4" className={clsx('h-1 w-[7px]', item === 'V' && 'opacity-40')}>
                <path d="M0 0h7L3.500 4z" />
              </svg>
            </button>
          );
        }
        const pressed = item[0] === '*';
        const disabled = item[0] === '-';
        const name = pressed || disabled ? item.slice(1) : item;
        return (
          <button
            key={i}
            aria-label={name}
            disabled={disabled}
            className={clsx(
              'flex h-[23px] w-[23px] shrink-0 items-center justify-center border',
              pressed ? 'border-t-[#a0a0a0] border-r-white border-b-white border-l-[#a0a0a0] bg-[#f8f8f8]' : 'border-transparent',
            )}
          >
            <svg
              viewBox="0 0 16 16"
              className={clsx('h-4 w-4 shrink-0 overflow-visible', disabled && 'opacity-60 grayscale')}
            >
              {icons[name]}
            </svg>
          </button>
        );
      })}
    </>
  );
}

function Band({ items }: { items: string }) {
  return (
    <div className="flex items-center border-r border-[#a0a0a0] bg-[#f0f0f0] pr-1">
      <div className="mr-[3px] ml-1 h-[22px] w-[3px] bg-[radial-gradient(circle,#b4b4b4_1px,transparent_1px)] bg-size-[3px_4px]" />
      <Tools items={items} />
    </div>
  );
}

function CaptionButtons({ active }: { active?: boolean }) {
  const base = 'flex h-[18px] w-8 items-center justify-center rounded-[2px] border';
  const plain = active
    ? 'border-[#5b7595] bg-linear-to-b from-[#c3d6ea] via-[#a2bad5] to-[#b4cbe4]'
    : 'border-[#8496b4] bg-[#c4d3e4]';
  const red = 'border-[#5b1a1a] bg-linear-to-b from-[#dc9a8c] via-[#bb3a24] to-[#cf6a50]';
  const stroke = active ? '#4d5a6d' : '#5a6482';
  return (
    <div className="ml-auto flex gap-[2px]">
      <button aria-label="Minimize" className={clsx(base, plain)}>
        <svg viewBox="0 0 12 10" className="h-[10px] w-3">
          <rect x="1" y="5.500" width="10" height="4" rx=".5" fill="#fff" stroke={stroke} />
        </svg>
      </button>
      <button aria-label="Maximize" className={clsx(base, plain)}>
        <svg viewBox="0 0 12 10" className="h-[10px] w-3">
          <rect x="1" y=".5" width="10" height="9" rx=".5" fill="#fff" stroke={stroke} />
          <rect x="4" y="3.500" width="4" height="3" fill="#b8cbe0" stroke={stroke} />
        </svg>
      </button>
      <button aria-label="Close" className={clsx(base, active ? red : plain)}>
        <svg viewBox="0 0 12 10" className="h-[10px] w-3">
          <path d="M2.500 1.500l7 7M9.500 1.500l-7 7" stroke={stroke} strokeWidth="4" />
          <path d="M2.500 1.500l7 7M9.500 1.500l-7 7" stroke="#fff" strokeWidth="2.200" />
        </svg>
      </button>
    </div>
  );
}

const raised = 'border border-t-white border-l-white border-r-[#696969] border-b-[#696969] bg-[#f0f0f0]';

function ArrowButton({ label, d, className }: { label: string; d: string; className: string }) {
  return (
    <button aria-label={label} className={clsx('flex shrink-0 items-center justify-center', raised, className)}>
      <svg viewBox="0 0 9 9" className="h-[9px] w-[9px]">
        <path d={d} stroke="none" />
      </svg>
    </button>
  );
}

function SheetNav() {
  const buttons = [
    ['Sheet list', 'M2 4h5L4.500 7z'],
    ['First sheet', 'M0 0h1v9H0zM7 0v9L2 4.500z'],
    ['Previous sheet', 'M7 0v9L2 4.500z'],
    ['Next sheet', 'M2 0v9l5-4.500z'],
    ['Last sheet', 'M8 0h1v9H8zM2 0v9l5-4.500z'],
  ];
  return (
    <div className="flex border border-[#696969]">
      {buttons.map(([label, d]) => (
        <ArrowButton key={label} label={label} d={d} className="w-4" />
      ))}
    </div>
  );
}

function Slant({ back, top }: { back?: boolean; top?: boolean }) {
  return (
    <svg viewBox="0 0 6 16" className={clsx('h-4 w-[6px] shrink-0', top && 'bg-white')}>
      <path d={back ? 'M0 0l6 16' : 'M6 0L0 16'} stroke="#000" />
    </svg>
  );
}

const dot = (x: number) => <circle key={x} cx={x} cy="114.500" r="3.500" fill="#f00" />;
const loop = 'c3.500 0 5.500 9.500 2.500 9.500c-3.500 0-1.500-9.500 5.500-9.500';
const coil = `h6q0-7 7-7${loop}${loop}${loop}q6 0 6 7h6`;

function Schematic() {
  return (
    <svg className="block h-full w-full flex-1" role="img" aria-label="Circuit">
      <g transform="translate(215 62)" fill="none">
        <g stroke="#008000" shapeRendering="crispEdges">
          <path d="M34 114.500h88M170 114.500h40M258 114.500h64M122.500 114V34M170.500 114V34M210.500 114V34M258.500 114V34" />
        </g>
        <g stroke="#00f" shapeRendering="crispEdges">
          <path d="M122 34.500h12M159 34.500h12M134.500 30.500h24v8h-24z" />
          <path d="M210 34.500h12M247 34.500h12M222.500 30.500h24v8h-24z" />
          <path d="M34.500 114v12M34.500 149v25M26 174.500h17M30 180.500h9" />
          <path d="M186.500 114v22M178 136.500h17M178 140.500h17M186.500 141v33M182.500 174.500h8v24h-8zM186.500 199v23M178 222.500h17M182 228.500h9" />
          <path d="M274.500 114v22M266 136.500h17M266 140.500h17M274.500 141v33M266 174.500h17M270 180.500h9" />
          <path d="M322.500 114v12M318.500 126.500h8v24h-8zM322.500 151v23M314 174.500h17M318 180.500h9" />
          <path d="M25 121.500h5M27.500 119v5M25 155.500h5M127 121.500h5M129.500 119v5M161 119.500h5M215 121.500h5M217.500 119v5M249 119.500h5" />
        </g>
        <g stroke="#00f">
          <circle cx="34.500" cy="137.500" r="11.500" />
          <path d={`M122 114.500${coil}`} />
          <path d={`M210 114.500${coil}`} />
        </g>
        {[122.5, 170.5, 186.5, 210.5, 258.5, 274.5, 322.5].map(dot)}
        <g fill="#008000" className="font-['DejaVu_Sans',sans-serif] text-[12px]">
          <text x="141" y="27">3</text>
          <text x="136" y="52">R3</text>
          <text x="133" y="80">L1</text>
          <text x="135" y="97">3u</text>
          <text x="229" y="27">3</text>
          <text x="224" y="52">R2</text>
          <text x="223" y="82">L2</text>
          <text x="223" y="102">3u</text>
          <text x="49" y="147">V1</text>
          <text x="152" y="146">C1</text>
          <text x="152" y="160">4.7u</text>
          <text x="159" y="193">R4</text>
          <text x="157" y="210">4.7</text>
          <text x="235" y="143">C2</text>
          <text x="234" y="158">0.47u</text>
          <text x="330" y="134">4</text>
          <text x="330" y="153">R1</text>
          <text x="322" y="113" fill="#00f">out</text>
        </g>
      </g>
    </svg>
  );
}

type Complex = [number, number];
const add = (a: Complex, b: Complex): Complex => [a[0] + b[0], a[1] + b[1]];
const mul = (a: Complex, b: Complex): Complex => [a[0] * b[0] - a[1] * b[1], a[0] * b[1] + a[1] * b[0]];
const div = (a: Complex, b: Complex): Complex => {
  const m = b[0] * b[0] + b[1] * b[1];
  return [(a[0] * b[0] + a[1] * b[1]) / m, (a[1] * b[0] - a[0] * b[1]) / m];
};
const par = (a: Complex, b: Complex) => div(mul(a, b), add(a, b));

// v(out) / V1 for the two-section filter on the schematic
function response(f: number): Complex {
  const w = 2 * Math.PI * f;
  const coilZ = par([0, w * 3e-6], [3, 0]);
  const load = par([4, 0], [0, -1 / (w * 0.47e-6)]);
  const section2 = add(coilZ, load);
  const shunt = par(section2, [4.7, -1 / (w * 4.7e-6)]);
  return mul(div(shunt, add(coilZ, shunt)), div(load, section2));
}

const gain = (f: number) => 20 * Math.log10(Math.hypot(...response(f)));
const phase = (f: number) => (Math.atan2(response(f)[1], response(f)[0]) * 180) / Math.PI;

const W = 1705;
const xOf = (decade: number) => (decade / 4) * W;

type PlotProps = {
  className: string;
  height: number;
  max: number;
  step: number;
  rows: number;
  color: string;
  fn: (f: number) => number;
};

function Plot({ className, height, max, step, rows, color, fn }: PlotProps) {
  const yOf = (v: number) => ((max - v) / (step * rows)) * height;
  const verticals: number[] = [];
  for (let d = 0; d < 4; d++) {
    for (let n = d === 0 ? 2 : 1; n < 10; n++) verticals.push(Math.round(xOf(d + Math.log10(n))));
  }
  const points: string[] = [];
  for (let i = 0; i <= 400; i++) {
    points.push(`${xOf(i / 100).toFixed(1)},${yOf(fn(10 ** (2 + i / 100))).toFixed(1)}`);
  }
  return (
    <div className={clsx('flex min-h-0', className)}>
      <div className="flex w-[52px] shrink-0 flex-col justify-between pr-[2px] text-right">
        {Array.from({ length: rows + 1 }, (_, i) => (
          <span key={i} className="flex h-0 items-center justify-end">
            {(max - i * step).toFixed(2)}
          </span>
        ))}
      </div>
      <svg viewBox={`0 0 ${W} ${height}`} preserveAspectRatio="none" className="h-full min-w-0 flex-1 overflow-visible">
        <g stroke="#808080" fill="none" shapeRendering="crispEdges">
          {verticals.map((x) => (
            <path key={x} d={`M${x + 0.5} 1V${height}`} strokeDasharray="3 3" />
          ))}
          {Array.from({ length: rows - 1 }, (_, i) => (
            <path key={i} d={`M1 ${Math.round((height * (i + 1)) / rows) + 0.5}H${W}`} strokeDasharray="3 3" />
          ))}
          <rect x=".5" y=".5" width={W} height={height} />
        </g>
        <polyline points={points.join(' ')} fill="none" stroke={color} strokeWidth="2" />
      </svg>
    </div>
  );
}

function FrequencyAxis() {
  return (
    <div className="ml-[52px] flex h-[18px] justify-between leading-[18px]">
      <span className="w-0">100</span>
      {['1K', '10K', '100K', '1M'].map((label) => (
        <span key={label} className="flex w-0 justify-center">
          {label}
        </span>
      ))}
    </div>
  );
}

const MAIN_BANDS = [
  '-new -open save -revert preview print',
  'animate -panel | prefs steps tools *graph | graphPen',
  'undo -redo -cut -copy paste -remove selectBox',
  'ground v resistor v cap v inductor v diode v npn v mosfet v opamp v pulse v battery v isrc v vsrc v',
  'cascade tileV tileH tileX single | calc',
];

const ALIGN = 'alignLeft alignCenter alignRight alignTop alignMiddle alignBottom';

const SCHEMATIC_ROWS = [
  '*pointer hand resistor text wirePen diagPen bus shapes v tree v picture table wave info help globeLink check checklist rows pagePen |',
  '*glassA *glassRes glassN -hands V glassV current power condition pinLink triangle cross grid v pageTable pageBorder pageForm connector | props | group -blank -rotate -flipH -flipV | findWave find | -notebook | -copyProps | editPage |',
  `-alert -stopX -dots | -front -back | -load | pageAdd pageDel | zoomIn zoomOut zoom100 | -slash V | -folderUp | -colorGrid V -fontA fontPen v | ${ALIGN}`,
];

const ANALYSIS_TOOLS = `pointer hand shapes v picture *zoomPlot cursorPlot scaleX scaleY scaleAuto scaleFx text | props | play -stopSquare -pause | tagPoints tagSquares | tokenRing tokenPlus | *gridV *gridH *gridVWide gridVPair | lineSolid lineCross | magX magY magF -magLines | tableErase | *trace1 trace2 trace3 trace4 trace5 trace6 trace7 trace8 trace9 trace10 trace11 | pasteWave v | list | paste123 | *fitX *fitY | zoomIn zoomOut zoom100 | -colorGrid V fontA fontPen v | -load | -front -back | ${ALIGN}`;

const MENU = ['File', 'Edit', 'Component', 'Windows', 'Options', 'AC', 'Scope', 'Monte Carlo', 'Help'];

function SchematicWindow() {
  return (
    <section className="flex min-w-0 flex-[717_1_0%] flex-col rounded-t-[5px] border border-[#222] border-t-[#404040] bg-linear-to-b from-[#98b3d2] to-[#b9d1ea] to-[32px] px-[7px] pb-2 shadow-[inset_-1px_-1px_0_#35b9dc]">
      <header className="flex h-[31px] shrink-0 items-center gap-[5px] pt-[7px] pr-px pl-[2px] text-[12px]">
        <svg viewBox="0 0 16 16" className="h-4 w-4 shrink-0">
          <rect x="1" y="1" width="14" height="14" fill="#a9c8f4" stroke="#000" strokeWidth="1.500" />
          <path d="M3 4h4v8H3M5 2v3M10 3v10M10 6h4" fill="none" stroke="#00f" strokeWidth="1.300" />
          <path d="M8 8h4M12 4l2-1M12 9l2 3" stroke="#d00" strokeWidth="1.500" />
        </svg>
        <span>D:\H_E_A\SOFT\СИМУЛЯТОРЫ\MC12\data\circuit1.cir</span>
        <CaptionButtons active />
      </header>
      <div className="flex min-h-0 flex-1 flex-col bg-[#f0f0f0] pb-px">
        <div className="shrink-0 px-[3px] pb-px">
          {SCHEMATIC_ROWS.map((row, i) => (
            <div key={i} className={clsx('flex h-7 items-center overflow-hidden', i < 2 && 'border-b border-[#a0a0a0]')}>
              <Tools items={row} />
            </div>
          ))}
        </div>
        <div className="flex min-h-0 flex-1 border-t-2 border-l border-[#696969]">
          <div className="flex min-w-0 flex-1 bg-white">
            <Schematic />
          </div>
          <div className="mr-px flex w-4 shrink-0 flex-col bg-[#f8f8f8]">
            <div className={clsx('h-[5px]', raised)} />
            <ArrowButton label="Scroll up" d="M0 7h9L4.500 2z" className="h-[17px]" />
            <div className={clsx('flex-[522]', raised)} />
            <div className="flex-[525]" />
            <ArrowButton label="Scroll down" d="M0 2h9L4.500 7z" className="h-4" />
          </div>
        </div>
        <div className="flex h-4 shrink-0 border-l border-[#696969] pl-[4px] font-['Liberation_Sans',sans-serif] text-[11px] leading-4">
          <SheetNav />
          <div className="flex min-w-0 flex-[340_1_0%] border-r-2 border-[#444]">
            <Slant back />
            <button className="bg-white px-[3px] font-bold">Main</button>
            <Slant top />
            <div className="flex flex-1 items-center border-t border-black">
              <button className="px-1">Text</button>
              <Slant back />
              <button className="px-1">Models</button>
              <Slant back />
              <button className="px-1">Info</button>
              <Slant />
            </div>
          </div>
          <div className="flex min-w-0 flex-[268_1_0%] bg-[#f8f8f8]">
            <ArrowButton label="Scroll left" d="M7 0v9L2 4.500z" className="w-[17px]" />
            <div className={clsx('flex-[76]', raised)} />
            <div className="flex-[158]" />
            <ArrowButton label="Scroll right" d="M2 0v9l5-4.500z" className="w-4" />
          </div>
          <div className="w-4 shrink-0 bg-[#f0f0f0]" />
        </div>
      </div>
    </section>
  );
}

function AnalysisWindow() {
  return (
    <section className="flex min-w-0 flex-[1796_1_0%] flex-col rounded-t-[5px] border border-[#404040] bg-linear-to-b from-[#bfcddb] to-[#d7e4f2] to-[32px] px-[7px] pb-2">
      <header className="flex h-[31px] shrink-0 items-center gap-[4px] pt-[7px] pr-px pl-px text-[12px] text-[#8f979f]">
        <svg viewBox="0 0 16 16" className="h-4 w-4 shrink-0">
          <rect x="1" y="1" width="14" height="14" fill="#fff" stroke="#000" strokeWidth="1.500" />
          <rect x="1" y="1" width="14" height="4" fill="#00a" />
          <rect x="5" y="7" width="9" height="7" fill="#00e5e5" stroke="#000" />
          <path d="M2 8h2M2 10h2M2 12h2" stroke="#000" />
          <path d="M6 12l2-3 3 1 2 2" fill="none" stroke="#000" />
        </svg>
        <span>AC Analysis</span>
        <CaptionButtons />
      </header>
      <div className="flex min-h-0 flex-1 flex-col bg-[#f0f0f0] pb-[2px]">
        <div className="ml-px flex h-7 shrink-0 items-center overflow-hidden">
          <Tools items={ANALYSIS_TOOLS} />
        </div>
        <div className="flex min-h-0 flex-1 flex-col border-t-2 border-l border-[#696969] bg-white pr-[37px] pb-3 font-['Liberation_Sans',sans-serif] text-[13px] leading-[14px] text-[#00f]">
          <div className="ml-[52px] flex h-[22px] shrink-0 items-end justify-center">circuit1.cir</div>
          <Plot className="flex-[511_1_0%]" height={511} max={10} step={5} rows={10} color="#00f" fn={gain} />
          <FrequencyAxis />
          <div className="mb-[6px] ml-[52px] h-[17px] underline">dB(v(out))</div>
          <Plot className="flex-[505_1_0%]" height={505} max={25} step={25} rows={5} color="#f00" fn={phase} />
          <FrequencyAxis />
          <div className="ml-[52px] h-[17px] text-[#f00]">ph(v(out)) (Degrees)</div>
          <div className="mr-[70px] h-[15px] text-center">F (Hz)</div>
        </div>
        <div className="flex h-4 shrink-0 border-l border-[#696969] pl-[6px] font-['Liberation_Sans',sans-serif] text-[12px] leading-4">
          <SheetNav />
          <Slant back />
          <button className="bg-white px-px font-bold">MAIN</button>
          <Slant top />
          <div className="flex-1 border-t border-black" />
          <div className={clsx('h-[6px] w-4', raised)} />
        </div>
      </div>
    </section>
  );
}

export default function App() {
  return (
    <div className="flex h-screen min-h-[700px] flex-col overflow-hidden bg-[#f0f0f0] font-['Roboto','Noto_Sans',sans-serif] text-[12px] text-[#111]">
      <header className="flex h-[23px] shrink-0 items-center bg-[#f2f2f2] pr-[2px] pl-[2px]">
        <svg viewBox="0 0 16 16" className="mr-[5px] h-4 w-4">
          <path d="M5 0h6l5 5v6l-5 5H5l-5-5V5z" fill="#e9a91f" />
          <circle cx="8" cy="8" r="6.500" fill="#52c234" />
          <text x="8" y="11" textAnchor="middle" fill="#a01212" className="text-[8px] font-bold">
            12
          </text>
        </svg>
        <h1>Micro-Cap 12.2.0.5 (64 bit) - D:\H_E_A\SOFT\СИМУЛЯТОРЫ\MC12\data\circuit1.cir</h1>
        <div className="ml-auto flex h-full">
          {[
            ['Minimize', 'M1 6.500h10'],
            ['Restore', 'M1.500 3.500h7v7h-7zM3.500 3V1.500h5q2 0 2 2v5H9'],
            ['Close', 'M1 1l10 10M11 1L1 11'],
          ].map(([label, d]) => (
            <button key={label} aria-label={label} className="flex w-[46px] items-center justify-center pb-1">
              <svg viewBox="0 0 12 12" className="h-3 w-3">
                <path d={d} fill="none" stroke="#111" />
              </svg>
            </button>
          ))}
        </div>
      </header>
      <nav className="flex h-[18px] shrink-0 items-center gap-[14px] bg-white pt-[2px] pl-[7px] text-black">
        {MENU.map((item) => (
          <button key={item}>{item}</button>
        ))}
      </nav>
      <div className="mt-[2px] flex h-[31px] shrink-0 border-t border-[#a0a0a0] bg-white pl-px">
        {MAIN_BANDS.map((items, i) => (
          <Band key={i} items={items} />
        ))}
        <div className="ml-1 flex border-l border-[#f0f0f0]">
          <Band items="-sidebar userGear globeGear" />
        </div>
      </div>
      <main className="mx-px flex min-h-0 flex-1 border border-[#a0a0a0] border-r-[#696969] border-b-[#696969] p-[3px]">
        <div className="flex min-w-0 flex-1 gap-[3px] border border-[#a0a0a0] bg-[#a6a6a6]">
          <SchematicWindow />
          <AnalysisWindow />
        </div>
      </main>
      <div className="flex h-[28px] shrink-0 items-start pl-[2px] font-['Liberation_Sans',sans-serif] text-[11px]">
        <button className="h-[22px] w-[61px] border-r border-b-2 border-[#696969] pt-[2px]">circuit1.cir</button>
        <button className="h-[20px] w-[66px] border-r-2 border-b-2 border-l border-[#696969]">AC Analysis</button>
      </div>
      <div className="flex h-[27px] shrink-0 items-center border-y border-[#a0a0a0] pr-[3px]">
        <div className="flex w-[15px] flex-col items-center gap-1">
          <button aria-label="Close message bar">
            <svg viewBox="0 0 7 7" className="block h-[7px] w-[7px]">
              <path d="M1 1l5 5M6 1L1 6" stroke="#000" strokeWidth="1.500" />
            </svg>
          </button>
          <svg viewBox="0 0 7 4" className="h-1 w-[7px]">
            <path d="M.5 0v3.500h6V0M3.500 0v3" fill="none" stroke="#a0a0a0" />
          </svg>
        </div>
        <input aria-label="Messages" className="h-[18px] min-w-0 flex-1 bg-white outline-none" />
      </div>
      <footer className="mt-[3px] flex h-[20px] shrink-0 gap-[2px] font-['Liberation_Sans',sans-serif] text-[14px] leading-[18px] text-black">
        <div className="w-[159px] border border-[#a0a0a0] border-r-white border-b-white pl-px">Select Mode</div>
        <div className="flex-1 border border-[#a0a0a0] border-r-white border-b-white" />
        <div className="w-[146px] border border-[#a0a0a0] border-r-white border-b-white" />
        <div className="w-[101px] border border-r-0 border-[#a0a0a0] border-b-white" />
      </footer>
    </div>
  );
}
